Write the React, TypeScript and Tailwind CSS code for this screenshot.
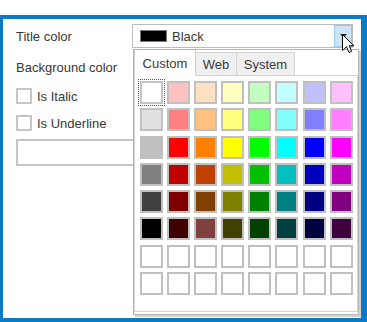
import React from "react";

const rows: string[][] = [
  ["#ffffff", "#ffc0c0", "#ffe0c0", "#ffffc0", "#c0ffc0", "#c0ffff", "#c0c0ff", "#ffc0ff"],
  ["#e0e0e0", "#ff8080", "#ffc080", "#ffff80", "#80ff80", "#80ffff", "#8080ff", "#ff80ff"],
  ["#c0c0c0", "#ff0000", "#ff8000", "#ffff00", "#00ff00", "#00ffff", "#0000ff", "#ff00ff"],
  ["#808080", "#c00000", "#c04000", "#c0c000", "#00c000", "#00c0c0", "#0000c0", "#c000c0"],
  ["#404040", "#800000", "#804000", "#808000", "#008000", "#008080", "#000080", "#800080"],
  ["#000000", "#400000", "#804040", "#404000", "#004000", "#004040", "#000040", "#400040"],
  ["#ffffff", "#ffffff", "#ffffff", "#ffffff", "#ffffff", "#ffffff", "#ffffff", "#ffffff"],
  ["#ffffff", "#ffffff", "#ffffff", "#ffffff", "#ffffff", "#ffffff", "#ffffff", "#ffffff"],
];

function Checkbox({ label }: { label: string }) {
  return (
    <div className="flex h-[16px] items-center gap-[5px]">
      <div className="h-[16px] w-[16px] border-2 border-[#c6c6c6] bg-white" />
      <span>{label}</span>
    </div>
  );
}

export default function App() {
  return (
    <div
      className="h-[322px] w-[367px] bg-white pt-[15px]"
      style={{ fontFamily: '"Liberation Sans", Arial, sans-serif' }}
    >
      <div className="relative h-[307px] border-b-4 border-l-[3px] border-r-[6px] border-t-4 border-solid border-[#0a7bc4] pl-[13px] pt-[5px] text-[13px] leading-none text-[#383838]">
        {/* Title color row */}
        <div className="flex h-[24px] items-center">
          <div className="w-[116px]">Title color</div>
          <div className="relative flex h-[24px] w-[221px] items-center border border-[#bcbcbc] bg-white pl-[7px]">
            <div className="h-[12px] w-[27px] border border-[#7a7a7a] bg-black" />
            <span className="ml-[5px]">Black</span>
            <div className="ml-auto flex h-[22px] w-[18px] items-center justify-center border border-[#9cc6ee] bg-[#cce4f7]">
              <svg width="7" height="4" viewBox="0 0 7 4">
                <path d="M0 0 L7 0 L3.5 4 Z" fill="#333" />
              </svg>
            </div>
          </div>
        </div>
        <div className="mt-[7px] flex h-[24px] items-center">Background color</div>
        <div className="mt-[9px]">
          <Checkbox label="Is Italic" />
        </div>
        <div className="mt-[11px]">
          <Checkbox label="Is Underline" />
        </div>
        <div className="mt-[8px] h-[27px] w-[337px] border-2 border-[#c6c6c6] bg-white" />

        {/* Dropdown popup */}
        <div className="absolute left-[130px] top-[30px] z-10 flex h-[266px] w-[226px] flex-col border border-[#b4b4b4] bg-white shadow-[2px_2px_0_#d2d2d2]">
          <div className="flex h-[26px] items-end">
            <div className="flex h-[26px] w-[62px] items-center justify-center border-l border-r border-[#cfcfcf] bg-white">
              Custom
            </div>
            <div className="flex h-[24px] w-[41px] items-center justify-center border-b border-r border-t border-[#d4d4d4] bg-[#f0f0f0]">
              Web
            </div>
            <div className="flex h-[24px] w-[58px] items-center justify-center border-b border-r border-t border-[#d4d4d4] bg-[#f0f0f0]">
              System
            </div>
            <div className="h-[24px] flex-1 border-b border-[#d4d4d4]" />
          </div>
          <div className="h-[236px] border-b border-l border-r border-[#d4d4d4] pl-[4.5px] pt-[5px]">
            <div className="grid grid-cols-[repeat(8,23px)] gap-x-[4.2px] gap-y-[4.3px]">
              {rows.flatMap((r, ri) =>
                r.map((c, ci) => (
                  <div
                    key={`${ri}-${ci}`}
                    className={
                      ri === 0 && ci === 0
                        ? "h-[23px] w-[23px] border-2 border-[#c4c4c4] outline-1 outline-offset-[1px] outline-dotted outline-[#555]"
                        : "h-[23px] w-[23px] border-2 border-[#c0c0c0]"
                    }
                    style={{ backgroundColor: c }}
                  />
                ))
              )}
            </div>
          </div>
        </div>

        {/* Mouse cursor */}
        <svg
          className="absolute left-[339px] top-[15px] z-20"
          width="13"
          height="20"
          viewBox="0 0 13 20"
        >
          <path
            d="M0.5 0.5 L0.5 16.5 L4.5 12.8 L7 18.5 L9.6 17.4 L7.2 11.8 L12 11.8 Z"
            fill="#fff"
            stroke="#000"
            strokeWidth="1"
            strokeLinejoin="miter"
          />
        </svg>
      </div>
    </div>
  );
}
